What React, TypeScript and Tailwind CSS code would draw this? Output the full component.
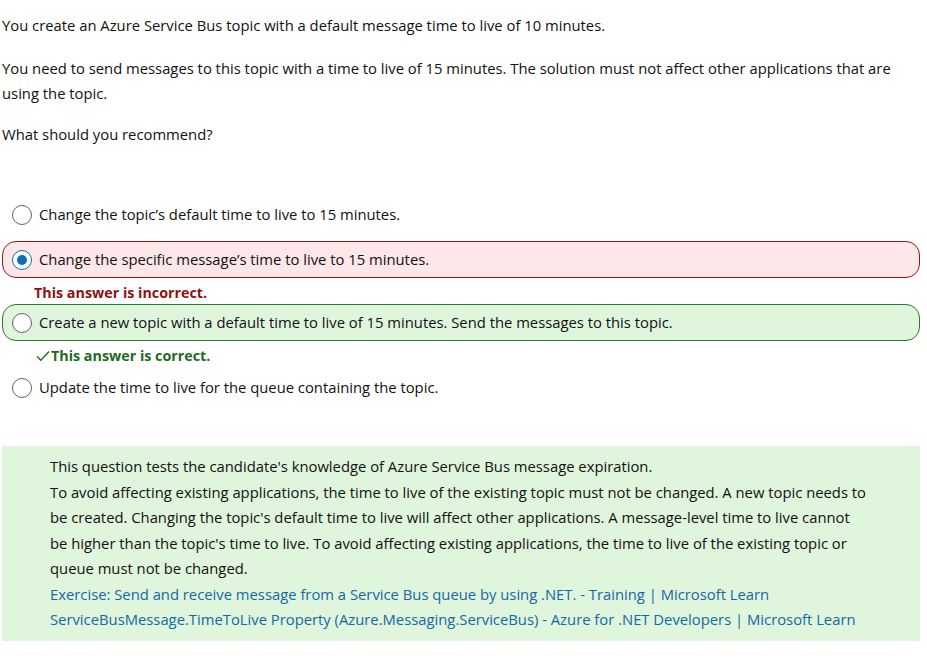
import React from "react";

const font = { fontFamily: "'Open Sans', 'Noto Sans', sans-serif" };

function Radio({ checked }: { checked?: boolean }) {
  return checked ? (
    <span className="flex h-[20px] w-[20px] shrink-0 items-center justify-center rounded-full border-[1.5px] border-[#0f6cbd] bg-white">
      <span className="h-[10px] w-[10px] rounded-full bg-[#0f6cbd]" />
    </span>
  ) : (
    <span className="h-[20px] w-[20px] shrink-0 rounded-full border border-[#616161] bg-white" />
  );
}

function Option({
  text,
  checked,
  tone,
}: {
  text: string;
  checked?: boolean;
  tone?: "red" | "green";
}) {
  const box =
    tone === "red"
      ? "border border-[#8a1b1b] bg-[#fde7e9]"
      : tone === "green"
      ? "border border-[#2b7a2b] bg-[#dff6dd]"
      : "border border-transparent";
  return (
    <div className={`flex h-[37px] items-center gap-[7px] rounded-[14px] pl-[9px] ${box}`}>
      <Radio checked={checked} />
      <span className="text-[14.8px] text-[#111]">{text}</span>
    </div>
  );
}

export default function App() {
  return (
    <div className="min-h-[671px] w-[927px] bg-white" style={font}>
      <div className="ml-[2px] w-[918px] pt-[13px] text-[14.8px] leading-[25px] text-[#111]">
        <p>You create an Azure Service Bus topic with a default message time to live of 10 minutes.</p>
        <p className="mt-[18px]">
          You need to send messages to this topic with a time to live of 15 minutes. The solution must not affect other applications that are
          <br />
          using the topic.
        </p>
        <p className="mt-[16px]">What should you recommend?</p>

        <div className="mt-[49px] flex flex-col">
          <Option text="Change the topic’s default time to live to 15 minutes." />
          <div className="mt-[8px]">
            <Option checked tone="red" text="Change the specific message’s time to live to 15 minutes." />
          </div>
          <div className="flex h-[26px] items-center pl-[32px] pt-[3px] text-[14.3px] font-bold text-[#8e1212]">
            This answer is incorrect.
          </div>
          <Option tone="green" text="Create a new topic with a default time to live of 15 minutes. Send the messages to this topic." />
          <div className="flex h-[26px] items-center pl-[34px] pt-[3px] text-[14.3px] font-bold text-[#1e6b1e]">
            <svg width="14" height="12" viewBox="0 0 14 12" className="mr-[1px]">
              <path d="M1 6.5 L4.8 10.2 L13 1.5" fill="none" stroke="#1e6b1e" strokeWidth="1.3" />
            </svg>
            This answer is correct.
          </div>
          <div className="mt-[2px]">
            <Option text="Update the time to live for the queue containing the topic." />
          </div>
        </div>

        <div className="mt-[40px] bg-[#dff5dc] pb-[8px] pl-[48px] pt-[8px] text-[14.8px] leading-[25.5px] text-[#111]">
          <div>This question tests the candidate's knowledge of Azure Service Bus message expiration.</div>
          <div>
            To avoid affecting existing applications, the time to live of the existing topic must not be changed. A new topic needs to
            <br />
            be created. Changing the topic's default time to live will affect other applications. A message-level time to live cannot
            <br />
            be higher than the topic's time to live. To avoid affecting existing applications, the time to live of the existing topic or
            <br />
            queue must not be changed.
          </div>
          <div className="text-[#116aa6]">Exercise: Send and receive message from a Service Bus queue by using .NET. - Training | Microsoft Learn</div>
          <div className="text-[#116aa6]">ServiceBusMessage.TimeToLive Property (Azure.Messaging.ServiceBus) - Azure for .NET Developers | Microsoft Learn</div>
        </div>
      </div>
    </div>
  );
}
